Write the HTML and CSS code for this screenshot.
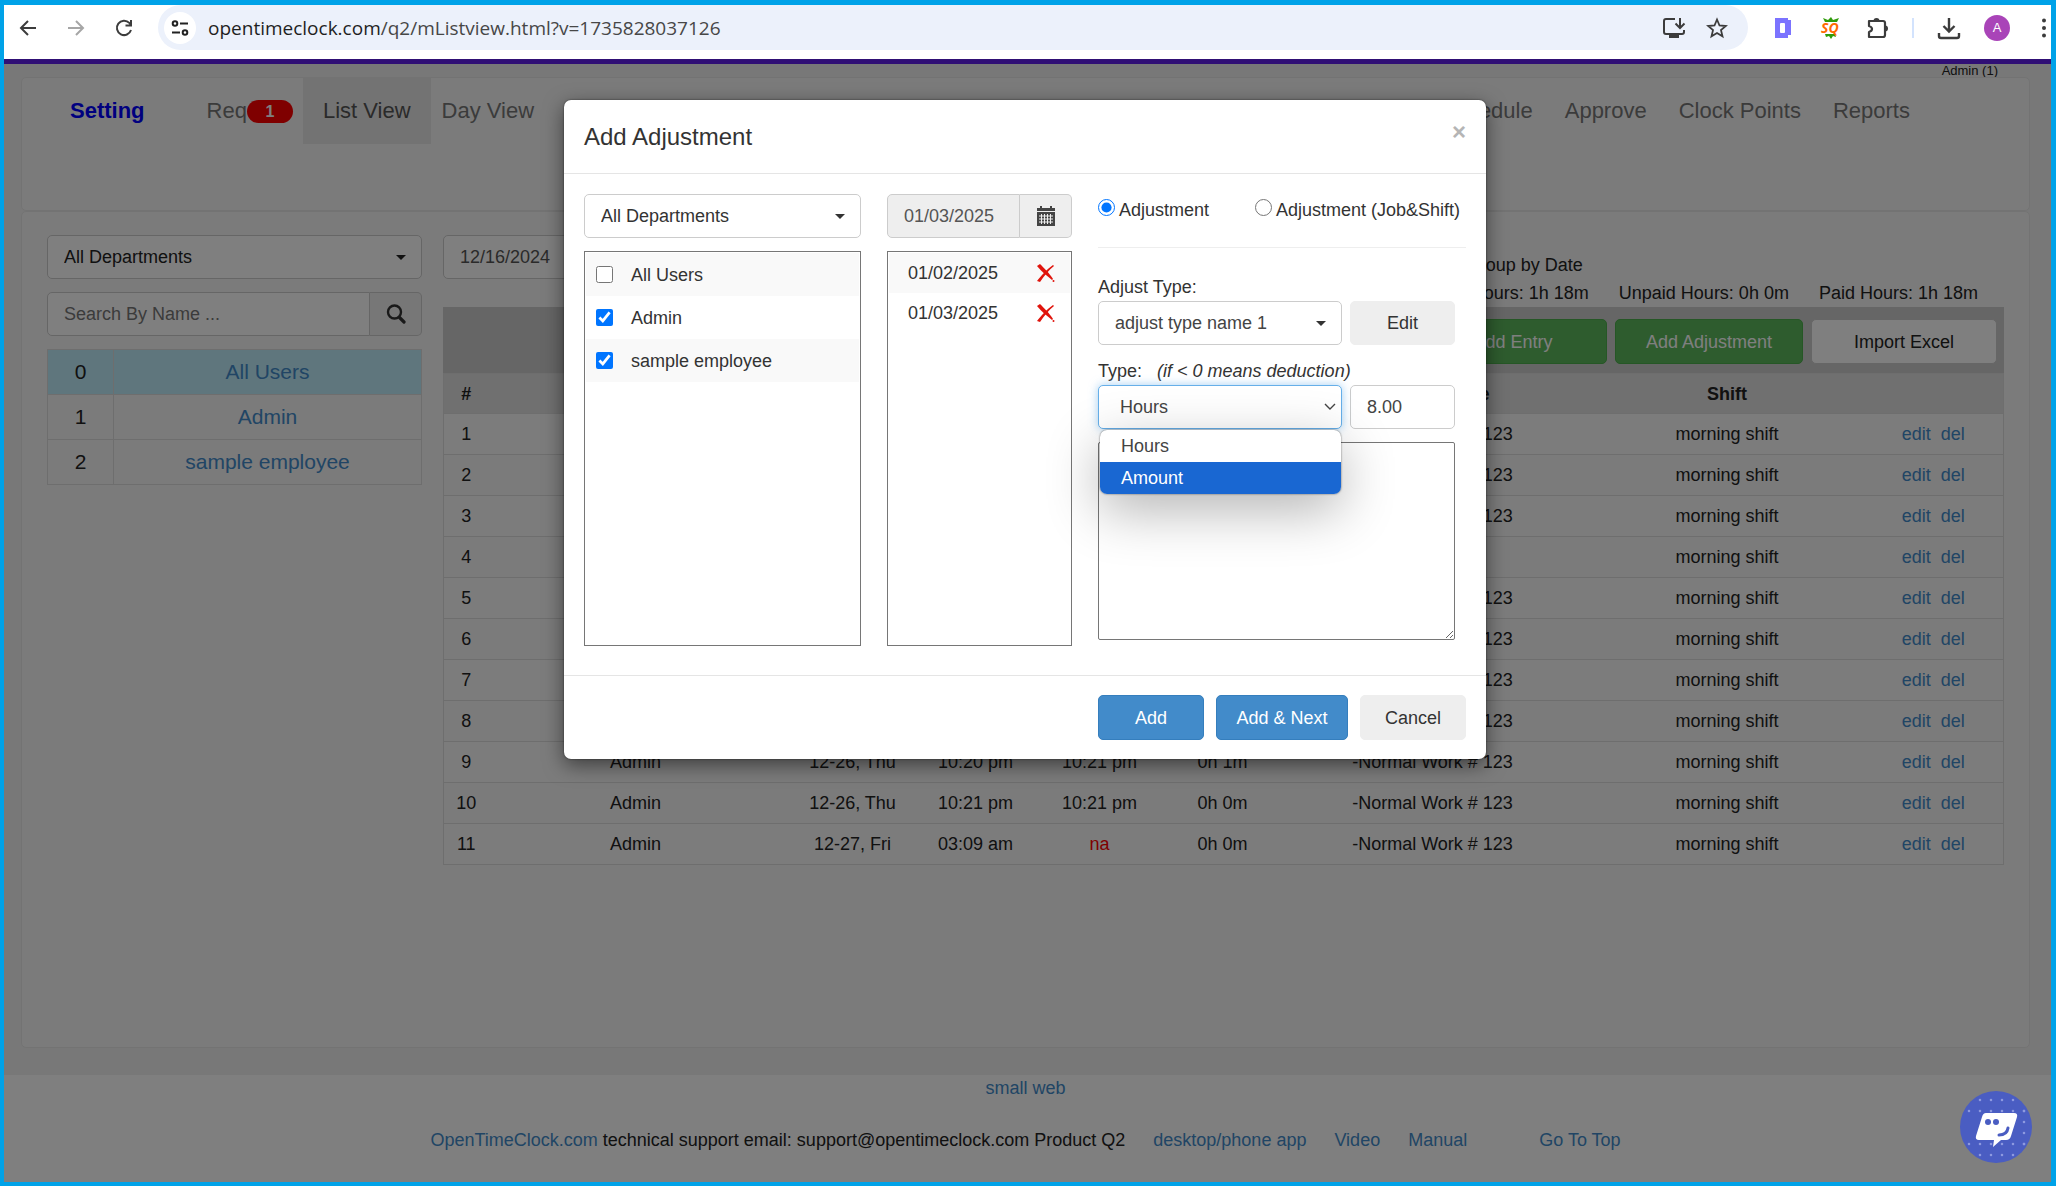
FILE: index.html
```html
<!DOCTYPE html>
<html lang="en">
<head>
<meta charset="utf-8">
<title>List View - Add Adjustment</title>
<link rel="stylesheet" href="styles.css">
</head>
<body>
<header class="browser">
  <button class="tool" aria-label="Back"><svg width="20" height="20" viewBox="0 0 20 20" fill="none" stroke="#3c3c3c" stroke-width="2"><path d="M18 10H3M10 3l-7 7 7 7"/></svg></button>
  <button class="tool" aria-label="Forward"><svg width="20" height="20" viewBox="0 0 20 20" fill="none" stroke="#a6a6a6" stroke-width="2"><path d="M2 10h15M10 3l7 7-7 7"/></svg></button>
  <button class="tool" aria-label="Reload"><svg width="20" height="20" viewBox="0 0 20 20" fill="none" stroke="#3c3c3c" stroke-width="2"><path d="M17 12a7.2 7.2 0 1 1-1.7-7.1L17 6.700M17 2v5.500h-5.500"/></svg></button>
  <div class="address">
    <span class="site-info"><svg width="18" height="18" viewBox="0 0 18 18" fill="none" stroke="#222" stroke-width="2"><circle cx="4" cy="4.500" r="2.300"/><path d="M9 4.500h8M1 13.500h8"/><circle cx="14" cy="13.500" r="2.300"/></svg></span>
    <span class="url"><span class="host">opentimeclock.com</span>/q2/mListview.html?v=1735828037126</span>
    <button class="tool" aria-label="Install"><svg width="24" height="22" viewBox="0 0 24 22" fill="none" stroke="#3c3c3c" stroke-width="2"><path d="M13 2H4a2 2 0 0 0-2 2v11a2 2 0 0 0 2 2h16a2 2 0 0 0 2-2v-2M18 1v9M13.500 6.500l4.500 4.500 4.500-4.500"/><path d="M8 18h8v2H8z" fill="#3c3c3c"/></svg></button>
    <button class="tool" aria-label="Bookmark"><svg width="22" height="22" viewBox="0 0 22 22" fill="none" stroke="#3c3c3c" stroke-width="1.800"><path d="M11 2.500l2.500 6 6.300.5-4.800 4.100 1.500 6.200L11 16l-5.500 3.300L7 13.100 2.200 9l6.300-.5z"/></svg></button>
  </div>
  <div class="extensions">
    <svg class="docs" width="18" height="22" viewBox="0 0 18 22"><path d="M1 1h13v2h3v15h-3v3H1z" fill="#7b73ff"/><rect x="6" y="6" width="5" height="10" rx="1" fill="#fff"/></svg>
    <svg width="22" height="24" viewBox="0 0 22 24"><path d="M3 2l5 2 3-3 2 3 6-2-2 4H5zM5 18l1 3 3-1 2 3 2-3 3 1-1-3z" fill="#2f9c0a"/><text x="1" y="17" class="sq">SQ</text></svg>
    <svg width="24" height="24" viewBox="0 0 24 24"><path d="M4 5h14a2 2 0 0 1 2 2v12a2 2 0 0 1-2 2H4v-5q3-1 3-3t-3-3z" fill="none" stroke="#3c3c3c" stroke-width="2.200" stroke-linejoin="round"/><path d="M8.500 5a3 3 0 0 1 6 0zM20 9.500a3 3 0 0 1 0 6z" fill="#3c3c3c"/></svg>
    <span class="divider"></span>
    <svg width="24" height="24" viewBox="0 0 24 24" fill="none" stroke="#3c3c3c" stroke-width="2.400"><path d="M12 2v13M6.500 10l5.500 5.500 5.500-5.500M2 17v3a2 2 0 0 0 2 2h16a2 2 0 0 0 2-2v-3"/></svg>
    <span class="avatar">A</span>
    <svg width="6" height="20" viewBox="0 0 6 20" fill="#3c3c3c"><circle cx="3" cy="2.500" r="2"/><circle cx="3" cy="10" r="2"/><circle cx="3" cy="17.500" r="2"/></svg>
  </div>
</header>

<div class="viewport">
  <div class="site">
    <div class="content">
      <p class="whoami">Admin (1)</p>
      <nav class="panel nav">
        <a class="setting" href="#">Setting</a>
        <a class="req" href="#">Req<span class="badge">1</span></a>
        <a class="current" href="#">List View</a>
        <a class="day" href="#">Day View</a>
        <a class="push" href="#">Schedule</a>
        <a href="#">Approve</a>
        <a href="#">Clock Points</a>
        <a href="#">Reports</a>
      </nav>
      <main class="panel list">
        <aside class="people">
          <div class="dropdown">
            <select class="control" aria-label="Department"><option>All Departments</option></select>
          </div>
          <div class="input-group">
            <input class="control" type="text" placeholder="Search By Name ..." aria-label="Search by name">
            <button class="addon" aria-label="Search"><svg width="20" height="20" viewBox="0 0 20 20" fill="none" stroke="#333"><circle cx="8.500" cy="8" r="6.500" stroke-width="2.400"/><path d="M13.500 13.500l4.500 4.500" stroke-width="3.200" stroke-linecap="round"/></svg></button>
          </div>
          <table class="users">
            <tr class="selected"><td>0</td><td><a href="#">All Users</a></td></tr>
            <tr><td>1</td><td><a href="#">Admin</a></td></tr>
            <tr><td>2</td><td><a href="#">sample employee</a></td></tr>
          </table>
        </aside>
        <section class="entries">
          <div class="filters">
            <input class="control date" type="text" value="12/16/2024" aria-label="From date">
            <div class="summary">
              <span class="group">Group by Date</span><span></span><span></span>
              <span>Hours: 1h 18m</span><span>Unpaid Hours: 0h 0m</span><span>Paid Hours: 1h 18m</span>
            </div>
          </div>
          <div class="actions">
            <button class="btn green">Add Entry</button>
            <button class="btn green">Add Adjustment</button>
            <button class="btn plain">Import Excel</button>
          </div>
          <table class="log">
            <colgroup><col class="c-num"><col class="c-name"><col class="c-date"><col class="c-in"><col class="c-out"><col class="c-hours"><col class="c-job"><col><col class="c-act"></colgroup>
            <thead><tr><th>#</th><th></th><th></th><th></th><th></th><th></th><th>Job and Note</th><th>Shift</th><th></th></tr></thead>
            <tbody>
              <tr><td>1</td><td></td><td></td><td></td><td></td><td></td><td>-Normal Work # 123</td><td>morning shift</td><td><a href="#">edit</a> <a href="#">del</a></td></tr>
              <tr><td>2</td><td></td><td></td><td></td><td></td><td></td><td>-Normal Work # 123</td><td>morning shift</td><td><a href="#">edit</a> <a href="#">del</a></td></tr>
              <tr><td>3</td><td></td><td></td><td></td><td></td><td></td><td>-Normal Work # 123</td><td>morning shift</td><td><a href="#">edit</a> <a href="#">del</a></td></tr>
              <tr><td>4</td><td></td><td></td><td></td><td></td><td></td><td></td><td>morning shift</td><td><a href="#">edit</a> <a href="#">del</a></td></tr>
              <tr><td>5</td><td></td><td></td><td></td><td></td><td></td><td>-Normal Work # 123</td><td>morning shift</td><td><a href="#">edit</a> <a href="#">del</a></td></tr>
              <tr><td>6</td><td></td><td></td><td></td><td></td><td></td><td>-Normal Work # 123</td><td>morning shift</td><td><a href="#">edit</a> <a href="#">del</a></td></tr>
              <tr><td>7</td><td></td><td></td><td></td><td></td><td></td><td>-Normal Work # 123</td><td>morning shift</td><td><a href="#">edit</a> <a href="#">del</a></td></tr>
              <tr><td>8</td><td></td><td></td><td></td><td></td><td></td><td>-Normal Work # 123</td><td>morning shift</td><td><a href="#">edit</a> <a href="#">del</a></td></tr>
              <tr><td>9</td><td>Admin</td><td>12-26, Thu</td><td>10:20 pm</td><td>10:21 pm</td><td>0h 1m</td><td>-Normal Work # 123</td><td>morning shift</td><td><a href="#">edit</a> <a href="#">del</a></td></tr>
              <tr><td>10</td><td>Admin</td><td>12-26, Thu</td><td>10:21 pm</td><td>10:21 pm</td><td>0h 0m</td><td>-Normal Work # 123</td><td>morning shift</td><td><a href="#">edit</a> <a href="#">del</a></td></tr>
              <tr><td>11</td><td>Admin</td><td>12-27, Fri</td><td>03:09 am</td><td class="missing">na</td><td>0h 0m</td><td>-Normal Work # 123</td><td>morning shift</td><td><a href="#">edit</a> <a href="#">del</a></td></tr>
            </tbody>
          </table>
        </section>
      </main>
    </div>
    <footer class="footer">
      <p><a href="#">small web</a></p>
      <p class="links"><span><a href="#">OpenTimeClock.com</a> technical support email: support@opentimeclock.com Product Q2</span><a href="#">desktop/phone app</a><a href="#">Video</a><a href="#">Manual</a><a class="top" href="#">Go To Top</a></p>
    </footer>
  </div>

  <div class="overlay">
    <div class="modal" role="dialog" aria-labelledby="modal-title">
      <div class="modal-header">
        <h1 id="modal-title">Add Adjustment</h1>
        <button class="close" aria-label="Close">×</button>
      </div>
      <div class="modal-body">
        <div class="column">
          <div class="dropdown">
            <select class="control" aria-label="Department"><option>All Departments</option></select>
          </div>
          <div class="picklist">
            <label><input type="checkbox"> All Users</label>
            <label><input type="checkbox" checked> Admin</label>
            <label><input type="checkbox" checked> sample employee</label>
          </div>
        </div>
        <div class="column">
          <div class="input-group disabled">
            <input class="control" type="text" value="01/03/2025" readonly aria-label="Date">
            <button class="addon" aria-label="Pick a date"><svg width="18" height="20" viewBox="0 0 18 20" fill="#444"><path d="M0 2h3V0h2v2h8V0h2v2h3v3H0zM0 6h18v14H0z"/><path d="M2 10h14M2 13h14M2 16h14M4.500 8v10M7.500 8v10M10.500 8v10M13.500 8v10" stroke="#eee"/></svg></button>
          </div>
          <ul class="dates">
            <li>01/02/2025 <button class="remove" aria-label="Remove 01/02/2025"><svg width="18" height="18" viewBox="0 0 18 18" fill="#e0140c"><path d="M3 0c3 3 10 10 13 15l-1 1C10 12 4 7 0 2z"/><path d="M16 1l1 1C12 6 7 12 3 18L0 17C4 12 10 5 16 1z"/><circle cx="16.500" cy="17" r="1"/></svg></button></li>
            <li>01/03/2025 <button class="remove" aria-label="Remove 01/03/2025"><svg width="18" height="18" viewBox="0 0 18 18" fill="#e0140c"><path d="M3 0c3 3 10 10 13 15l-1 1C10 12 4 7 0 2z"/><path d="M16 1l1 1C12 6 7 12 3 18L0 17C4 12 10 5 16 1z"/><circle cx="16.500" cy="17" r="1"/></svg></button></li>
          </ul>
        </div>
        <div class="form">
          <div class="kinds">
            <label><input type="radio" name="kind" checked>Adjustment</label>
            <label><input type="radio" name="kind">Adjustment (Job&amp;Shift)</label>
          </div>
          <label class="caption" for="adjust-type">Adjust Type:</label>
          <div class="pair">
            <div class="dropdown">
              <select class="control" id="adjust-type"><option>adjust type name 1</option></select>
            </div>
            <button class="btn gray">Edit</button>
          </div>
          <label class="caption" for="unit">Type: <em>(if &lt; 0 means deduction)</em></label>
          <div class="pair">
            <div class="unit">
              <select class="control" id="unit"><option>Hours</option><option>Amount</option></select>
              <svg width="12" height="8" viewBox="0 0 12 8" fill="none" stroke="#444" stroke-width="1.400"><path d="M1 1l5 5 5-5"/></svg>
              <ul class="menu"><li>Hours</li><li class="active">Amount</li></ul>
            </div>
            <input class="control" type="text" value="8.00" aria-label="Value">
          </div>
          <textarea aria-label="Note"></textarea>
        </div>
      </div>
      <div class="modal-footer">
        <button class="btn blue">Add</button>
        <button class="btn blue wide">Add &amp; Next</button>
        <button class="btn gray">Cancel</button>
      </div>
    </div>
  </div>

  <button class="chat" aria-label="Chat">
    <svg width="72" height="72" viewBox="0 0 72 72"><circle cx="36" cy="36" r="36" fill="#4a5dc2"/>
      <g fill="none" stroke="#8d99e0" stroke-width="2.600" stroke-linecap="round"><path d="M20 9H54" stroke-dasharray="0 11"/><path d="M9 20H65M9 53H65" stroke-dasharray="0 11"/><path d="M64 20V56" stroke-dasharray="0 11"/><path d="M20 64H54" stroke-dasharray="0 11"/></g>
      <path d="M26 22h28q4 0 3 4l-6 19q-1 4-5 4h-5l-8 7 1-7H19q-4 0-3-4l6-19q1-4 4-4z" fill="#fff"/>
      <g fill="#4a5dc2"><circle cx="28" cy="31" r="3"/><circle cx="36" cy="31" r="3"/></g>
      <path d="M48 37q-1 7-9 7" fill="none" stroke="#4a5dc2" stroke-width="3" stroke-linecap="round"/></svg>
  </button>
</div>
</body>
</html>
```
FILE: styles.css
```css
* { box-sizing: border-box; }

body {
  margin: 0;
  min-height: 100vh;
  display: flex;
  flex-direction: column;
  border: solid #00a2e8;
  border-width: 5px 5px 4px 4px;
  background: #fff;
  color: #333;
  font: 18px/26px "Liberation Sans", Arial, sans-serif;
}

p, h1, ul { margin: 0; padding: 0; }
li { list-style: none; }
a { color: #428bca; text-decoration: none; }
button, input, select, textarea { font: inherit; color: inherit; margin: 0; }
button { cursor: pointer; }
svg { display: block; flex: none; }

/* Browser toolbar */
.browser {
  display: flex;
  align-items: flex-start;
  height: 59px;
  border-bottom: 5px solid #300f75;
}
.tool {
  display: grid;
  place-items: center;
  width: 48px;
  height: 45px;
  padding: 0;
  border: 0;
  background: none;
}
.address {
  flex: 1;
  display: flex;
  align-items: center;
  height: 45px;
  margin-left: 10px;
  padding: 0 10px 0 6px;
  border-radius: 24px;
  background: #ecf1fb;
}
.address .tool { width: 43px; }
.site-info {
  display: grid;
  place-items: center;
  width: 32px;
  height: 32px;
  border-radius: 50%;
  background: #fff;
}
.url {
  flex: 1;
  margin-left: 12px;
  font: 19px/26px "Open Sans", "Noto Sans", sans-serif;
  color: #474747;
}
.host { color: #1f1f1f; }
.extensions {
  display: flex;
  align-items: center;
  gap: 23px;
  height: 45px;
  padding: 0 4px 0 26px;
}
.docs { margin-right: 5px; }
.sq { font: italic bold 14px "Open Sans", sans-serif; fill: #ff6a00; }
.divider { width: 2px; height: 20px; background: #d3e3fd; }
.avatar {
  width: 26px;
  height: 26px;
  margin-right: 8px;
  border-radius: 50%;
  background: #a944b8;
  color: #fff;
  font: 13px/26px "Liberation Sans", sans-serif;
  text-align: center;
}

/* Page behind the dialog */
.viewport { flex: 1; display: grid; position: relative; }
.site {
  display: flex;
  flex-direction: column;
  min-width: 0;
  background: #f0f0f0;
  color: #222;
}
.content { flex: 1; display: flex; flex-direction: column; padding: 0 21px 27px 17px; }
.whoami { padding-right: 32px; font-size: 13px; line-height: 13px; text-align: right; }
.panel { border: 1px solid #e7e7e7; border-radius: 5px; background: #f6f6f6; }

.nav { display: flex; height: 134px; padding: 0 103px 0 32px; font-size: 22px; line-height: 66px; }
.nav a { height: 66px; padding: 0 16px; color: #777; white-space: nowrap; }
.nav .setting { color: #00f; font-weight: bold; }
.nav .req { display: flex; align-items: center; margin-left: 30px; padding-right: 10px; }
.badge {
  width: 46px;
  height: 23px;
  border-radius: 12px;
  background: #f00;
  color: #fff;
  font-size: 16px;
  font-weight: bold;
  line-height: 23px;
  text-align: center;
}
.nav .current { padding: 0 20px; background: #e7e7e7; color: #555; }
.nav .day { padding: 0 11px; }
.nav .push { margin-left: auto; }

.list { flex: 1; display: flex; gap: 21px; padding: 23px 25px 0; }
.people { width: 375px; display: flex; flex-direction: column; gap: 13px; }

.control {
  width: 100%;
  min-width: 0;
  height: 44px;
  padding: 0 16px;
  border: 1px solid #ccc;
  border-radius: 5px;
  background: #fff;
  appearance: none;
}
.dropdown, .unit { display: grid; align-items: center; }
.dropdown .control, .unit .control { grid-area: 1 / 1; }
.dropdown::after {
  content: "";
  grid-area: 1 / 1;
  justify-self: end;
  margin-right: 16px;
  border: 5px solid transparent;
  border-top-color: currentColor;
  border-bottom: 0;
  pointer-events: none;
}
.input-group { display: flex; }
.input-group .control { flex: 1; color: #555; border-radius: 5px 0 0 5px; }
.addon {
  display: grid;
  place-items: center;
  width: 52px;
  height: 44px;
  padding: 0;
  border: 1px solid #ccc;
  border-left: 0;
  border-radius: 0 5px 5px 0;
  background: #eee;
}
.control::placeholder { color: #777; opacity: 1; }

table { border-collapse: collapse; table-layout: fixed; width: 100%; text-align: center; }
td, th { padding: 0; }
.users { font-size: 21px; }
.users td { height: 45px; border: 1px solid #ddd; }
.users td:first-child { width: 66px; }
.selected { background: #beedfa; }

.entries { flex: 1; min-width: 0; }
.filters { display: flex; justify-content: space-between; align-items: flex-start; height: 72px; }
.filters .date { width: 160px; color: #555; }
.summary {
  display: grid;
  grid-template-columns: repeat(3, auto);
  column-gap: 30px;
  align-self: flex-end;
  padding-right: 26px;
  line-height: 28px;
  text-align: right;
}
.summary .group { padding-right: 6px; }
.actions { display: flex; justify-content: flex-end; gap: 8px; height: 66px; padding: 12px 7px 0; background: #ccc; }

.btn {
  width: 106px;
  height: 45px;
  padding: 0;
  border: 1px solid #eee;
  border-radius: 5px;
}
.actions .btn { width: 188px; }
.green { border-color: #4cae4c; background: #5cb85c; color: #fff; }
.actions .plain { width: 186px; border-color: #ccc; background: #fff; }
.blue { border-color: #357ebd; background: #428bca; color: #fff; }
.gray { background: #eee; }

.log { border: 1px solid #ddd; }
.log th { height: 40px; background: #e0e0e0; }
.log td { height: 41px; border-top: 1px solid #ddd; }
.log tbody tr:nth-child(odd) { background: #f9f9f9; }
.log a + a { margin-left: 5px; }
.c-num { width: 45px; }
.c-name { width: 294px; }
.c-date { width: 140px; }
.c-in { width: 106px; }
.c-out { width: 142px; }
.c-hours { width: 104px; }
.c-job { width: 316px; }
.c-act { width: 140px; }
.missing { color: #f00; }

.footer { height: 107px; padding-right: 4px; background: #fff; text-align: center; }
.links { display: flex; justify-content: center; gap: 28px; padding-top: 26px; }
.top { margin-left: 44px; }

/* Dialog */
.overlay { position: absolute; inset: 0; padding: 36px 5px 0 0; background: rgba(0, 0, 0, 0.5); }
.modal {
  width: 922px;
  max-width: 100%;
  margin: 0 auto;
  border-radius: 7px;
  background: #fff;
  box-shadow: 0 6px 20px rgba(0, 0, 0, 0.5), 0 0 2px rgba(0, 0, 0, 0.6);
}
.modal-header {
  display: flex;
  justify-content: space-between;
  align-items: flex-start;
  height: 74px;
  padding: 20px;
  border-bottom: 1px solid #e5e5e5;
}
h1 { font-size: 24px; line-height: 34px; font-weight: normal; }
.close { padding: 0; border: 0; background: none; color: #b5b5b5; font-size: 24px; font-weight: bold; line-height: 24px; }
.modal-body {
  display: grid;
  grid-template-columns: 277px 185px 1fr;
  gap: 26px;
  padding: 20px 20px 29px;
}
.column { display: flex; flex-direction: column; gap: 13px; }
.picklist, .dates { flex: 1; border: 1px solid #767676; padding: 1px; }
.picklist label { display: flex; align-items: center; gap: 18px; height: 43px; padding-left: 10px; }
.picklist label:nth-child(odd), .dates li:nth-child(odd) { background: #f9f9f9; }
input[type="checkbox"], input[type="radio"] { width: 17px; height: 17px; accent-color: #0075ff; }
.disabled .control, .disabled .addon { background: #eee; }
.dates li { display: flex; justify-content: space-between; align-items: center; height: 40px; padding: 0 15px 0 19px; }
.remove { padding: 0; border: 0; background: none; }

.kinds {
  display: flex;
  justify-content: space-between;
  height: 54px;
  margin-bottom: 26px;
  padding: 3px 6px 0 0;
  border-bottom: 1px solid #eee;
}
.kinds label { display: flex; gap: 4px; }
.kinds input { margin-top: 2px; }
.caption { display: block; line-height: 27px; }
.caption em { margin-left: 10px; }
.pair { display: grid; grid-template-columns: 244px 105px; gap: 8px; margin-bottom: 13px; }
.pair .btn { width: 105px; height: 44px; }
.pair .control { color: #444; }
.unit { position: relative; }
.unit .control {
  padding-left: 21px;
  border-color: #66afe9;
  box-shadow: 0 0 10px rgba(102, 175, 233, 0.6);
}
.unit svg { grid-area: 1 / 1; justify-self: end; margin-right: 6px; pointer-events: none; }
.menu {
  position: absolute;
  top: 45px;
  left: 2px;
  right: 1px;
  overflow: hidden;
  border-radius: 7px;
  background: #fff;
  color: #444;
  line-height: 32px;
  box-shadow: 0 0 2px rgba(0, 0, 0, 0.6), 0 16px 54px rgba(0, 0, 0, 0.3);
}
.menu li { padding-left: 21px; }
.menu .active { background: #1967d2; color: #fff; }
textarea {
  display: block;
  width: 357px;
  height: 198px;
  margin-bottom: 6px;
  border: 1px solid #767676;
  border-radius: 2px;
  background: #fff;
}

.modal-footer {
  display: flex;
  justify-content: flex-end;
  gap: 12px;
  padding: 19px 20px;
  border-top: 1px solid #e5e5e5;
}
.wide { width: 132px; }

.chat { position: absolute; right: 19px; bottom: 19px; padding: 0; border: 0; background: none; }
```
